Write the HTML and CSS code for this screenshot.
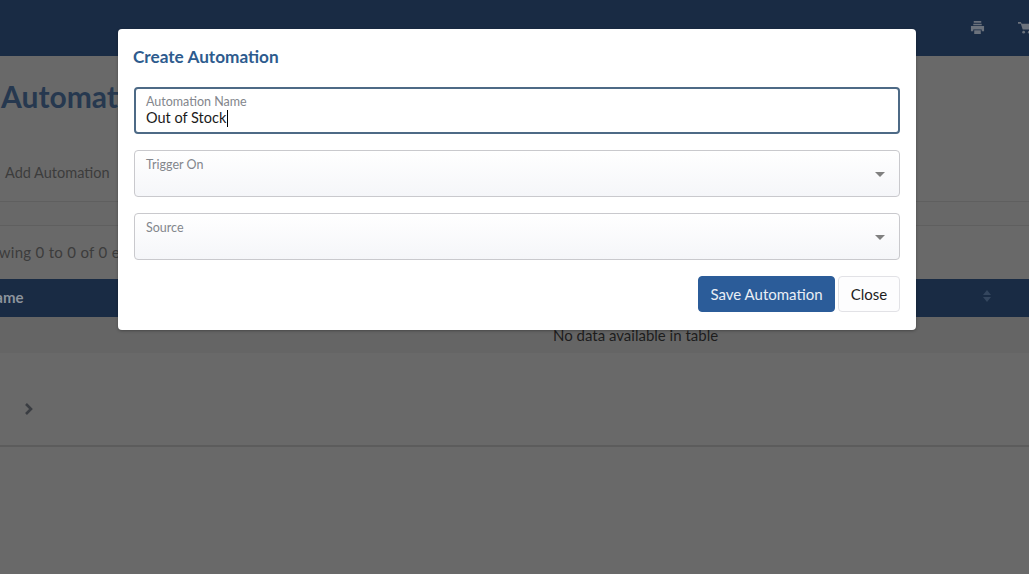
FILE: index.html
```html
<!DOCTYPE html>
<html lang="en">
<head>
<meta charset="utf-8">
<title>Create Automation</title>
<link rel="stylesheet" href="styles.css">
</head>
<body>
<div class="page">
  <header class="topbar">
    <svg class="top-icon print" viewBox="0 0 16 16"><path d="M4 1h8v2H4z M3.500 4h9v1.500h-9z M1 6.500h14V12h-2.500v-2h-9v2H1z M4.500 11h7v4h-7z" fill="#6b727c"/></svg>
    <svg class="top-icon cart" viewBox="0 0 16 16"><path d="M0 2h3l1 2h12l-2 6H5L3 4H0z" fill="#6b727c"/><circle cx="6" cy="13" r="1.500" fill="#6b727c"/><circle cx="12" cy="13" r="1.500" fill="#6b727c"/></svg>
  </header>
  <h1 class="page-title">Automations</h1>
  <div class="tab-row"><span class="tab">Add Automation</span></div>
  <div class="strip"></div>
  <div class="info-row"><span class="info">Showing 0 to 0 of 0 entries</span></div>
  <div class="thead">
    <span class="th-name">Name</span>
    <svg class="sort" viewBox="0 0 10 14"><path d="M5 1l4 5H1z M5 13l4-5H1z" fill="#34465e"/></svg>
  </div>
  <div class="empty-row">No data available in table</div>
  <div class="pager">
    <svg class="chev" viewBox="0 0 10 14"><path d="M2 2l5 5-5 5" fill="none" stroke="#3a3d42" stroke-width="2.600"/></svg>
  </div>
</div>
<div class="overlay">
  <div class="modal">
    <h2 class="modal-title">Create Automation</h2>
    <div class="field focused">
      <label class="field-label">Automation Name</label>
      <div class="field-value">Out of Stock<span class="caret"></span></div>
    </div>
    <div class="field select">
      <label class="field-label">Trigger On</label>
      <span class="arrow"></span>
    </div>
    <div class="field select">
      <label class="field-label">Source</label>
      <span class="arrow"></span>
    </div>
    <div class="actions">
      <button class="btn primary">Save Automation</button>
      <button class="btn plain">Close</button>
    </div>
  </div>
</div>
</body>
</html>
```
FILE: styles.css
```css
* { box-sizing: border-box; }
html, body { margin: 0; height: 100%; }
body {
  position: relative;
  overflow: hidden;
  background: #696969;
  font-family: "Lato", "Noto Sans", sans-serif;
  color: #1a1a1a;
}
.page { height: 574px; display: flex; flex-direction: column; }
.topbar {
  height: 56px;
  flex: none;
  background: #192b44;
  display: flex;
  align-items: center;
  gap: 33px;
  padding: 0 0 2px 970px;
}
.top-icon { width: 15px; height: 15px; flex: none; }
.page-title {
  margin: 0;
  height: 81px;
  padding: 20px 0 0 1px;
  font-size: 30px;
  line-height: 40px;
  font-weight: 700;
  color: #26384f;
  white-space: nowrap;
}
.tab-row {
  height: 65px;
  padding: 25px 0 0 5px;
  border-bottom: 1px solid #5f5f5f;
}
.tab { font-size: 14.500px; line-height: 20px; color: #3c3c3c; }
.strip { height: 24px; background: #686868; border-bottom: 1px solid #5f5f5f; }
.info-row { height: 53px; padding: 16px 0 0 0; overflow: hidden; }
.info { display: block; margin-left: -27px; font-size: 15px; letter-spacing: .3px; line-height: 20px; color: #3c3c3c; white-space: nowrap; }
.thead {
  height: 38px;
  flex: none;
  background: #192b44;
  display: flex;
  align-items: center;
  justify-content: space-between;
  padding-right: 37px;
  overflow: hidden;
}
.th-name { margin: 0 0 2px -16px; font-size: 15px; font-weight: 700; color: #8c939d; }
.sort { width: 10px; height: 14px; margin-bottom: 4px; }
.empty-row {
  height: 36px;
  flex: none;
  background: #656565;
  padding-left: 553px;
  padding-top: 9px;
  font-size: 15px;
  line-height: 18px;
  color: #1d1d1d;
}
.pager {
  height: 94px;
  flex: none;
  border-bottom: 2px solid #5c5c5c;
  display: flex;
  align-items: center;
  padding-left: 24px;
  padding-top: 20px;
}
.chev { width: 10px; height: 14px; }
.overlay { position: absolute; top: 29px; left: 118px; }
.modal {
  width: 798px;
  height: 301px;
  background: #fff;
  border-radius: 4px;
  padding: 14px 16px 0 16px;
  display: flex;
  flex-direction: column;
  box-shadow: 0 1px 3px rgba(0, 0, 0, .3);
}
.modal-title {
  margin: 0 0 16px -1px;
  font-size: 17.200px;
  line-height: 28px;
  font-weight: 700;
  color: #2d5b8e;
}
.field {
  position: relative;
  height: 47px;
  margin-bottom: 16px;
  padding: 7px 11px 0 11px;
  border: 1px solid #c9c9cd;
  border-radius: 4px;
  background: #fff;
}
.field.focused { border: 2px solid #4d6a86; padding: 6px 10px 0 10px; }
.field.select { background: linear-gradient(#fff, #f5f6f9); }
.field-label { display: block; font-size: 12.500px; line-height: 14px; color: #83868c; }
.field-value { font-size: 14.500px; line-height: 20px; margin-top: -1px; color: #1b1b1b; display: flex; align-items: center; }
.caret { display: inline-block; width: 1px; height: 17px; background: #000; margin-left: 1px; }
.arrow {
  position: absolute;
  right: 14px;
  top: 21px;
  border-style: solid;
  border-width: 5px 5px 0;
  border-color: #808080 transparent transparent;
}
.actions { display: flex; justify-content: flex-end; gap: 3px; }
.btn {
  height: 36px;
  font: inherit;
  font-size: 15px;
  border-radius: 4px;
  padding: 0 0 1px;
}
.primary { width: 137px; background: #2b5c99; border: 1px solid #2b5c99; color: #e9eef5; }
.plain { width: 62px; background: #fdfdfe; border: 1px solid #e2e2e6; color: #1d1d1d; }
```
